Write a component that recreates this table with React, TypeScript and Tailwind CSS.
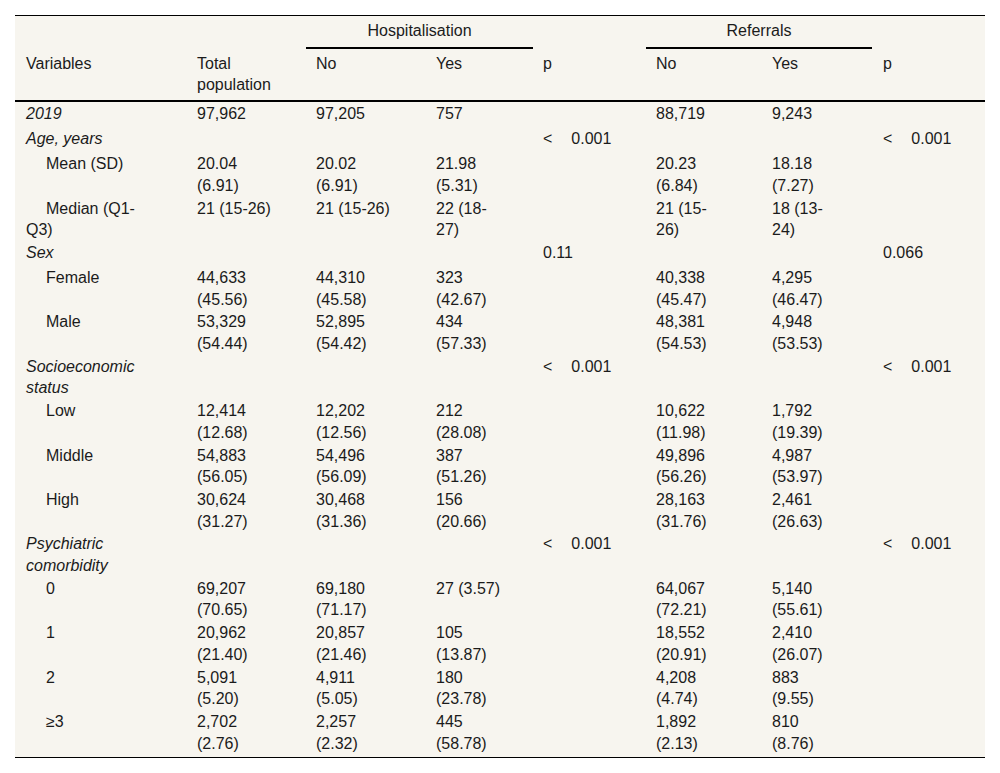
import React from 'react';

// column padding: keeps the wrap widths of the source table
const COL = [
  'pl-[11px] pr-[40px]',
  'pl-[11px] pr-[29px]',
  'pl-[10px] pr-[30px]',
  'pl-[10px] pr-[27px]',
  'pl-[10px] pr-[10px]',
  'pl-[10px] pr-[36px]',
  'pl-[10px] pr-[30px]',
  'pl-[11px] pr-[10px]',
];

type Row = {
  label: string;
  kind: 'head' | 'sub';
  cells: string[];
};

const rows: Row[] = [
  { label: '2019', kind: 'head', cells: ['97,962', '97,205', '757', '', '88,719', '9,243', ''] },
  { label: 'Age, years', kind: 'head', cells: ['', '', '', '<0.001', '', '', '<0.001'] },
  { label: 'Mean (SD)', kind: 'sub', cells: ['20.04 (6.91)', '20.02 (6.91)', '21.98 (5.31)', '', '20.23 (6.84)', '18.18 (7.27)', ''] },
  { label: 'Median (Q1-Q3)', kind: 'sub', cells: ['21 (15-26)', '21 (15-26)', '22 (18-27)', '', '21 (15-26)', '18 (13-24)', ''] },
  { label: 'Sex', kind: 'head', cells: ['', '', '', '0.11', '', '', '0.066'] },
  { label: 'Female', kind: 'sub', cells: ['44,633 (45.56)', '44,310 (45.58)', '323 (42.67)', '', '40,338 (45.47)', '4,295 (46.47)', ''] },
  { label: 'Male', kind: 'sub', cells: ['53,329 (54.44)', '52,895 (54.42)', '434 (57.33)', '', '48,381 (54.53)', '4,948 (53.53)', ''] },
  { label: 'Socioeconomic status', kind: 'head', cells: ['', '', '', '<0.001', '', '', '<0.001'] },
  { label: 'Low', kind: 'sub', cells: ['12,414 (12.68)', '12,202 (12.56)', '212 (28.08)', '', '10,622 (11.98)', '1,792 (19.39)', ''] },
  { label: 'Middle', kind: 'sub', cells: ['54,883 (56.05)', '54,496 (56.09)', '387 (51.26)', '', '49,896 (56.26)', '4,987 (53.97)', ''] },
  { label: 'High', kind: 'sub', cells: ['30,624 (31.27)', '30,468 (31.36)', '156 (20.66)', '', '28,163 (31.76)', '2,461 (26.63)', ''] },
  { label: 'Psychiatric comorbidity', kind: 'head', cells: ['', '', '', '<0.001', '', '', '<0.001'] },
  { label: '0', kind: 'sub', cells: ['69,207 (70.65)', '69,180 (71.17)', '27 (3.57)', '', '64,067 (72.21)', '5,140 (55.61)', ''] },
  { label: '1', kind: 'sub', cells: ['20,962 (21.40)', '20,857 (21.46)', '105 (13.87)', '', '18,552 (20.91)', '2,410 (26.07)', ''] },
  { label: '2', kind: 'sub', cells: ['5,091 (5.20)', '4,911 (5.05)', '180 (23.78)', '', '4,208 (4.74)', '883 (9.55)', ''] },
  { label: '≥3', kind: 'sub', cells: ['2,702 (2.76)', '2,257 (2.32)', '445 (58.78)', '', '1,892 (2.13)', '810 (8.76)', ''] },
];

// allow a line break right after each hyphen, as in the source
function Breakable({ text }: { text: string }) {
  const parts = text.split('-');
  return (
    <>
      {parts.map((p, i) => (
        <React.Fragment key={i}>
          {p}
          {i < parts.length - 1 && (
            <>
              -<wbr />
            </>
          )}
        </React.Fragment>
      ))}
    </>
  );
}

function PValue({ v }: { v: string }) {
  if (v.startsWith('<')) {
    return (
      <>
        <span>&lt;</span>
        <span className="ml-[19px]">{v.slice(1)}</span>
      </>
    );
  }
  return <>{v}</>;
}

export default function App() {
  return (
    <div
      className="min-h-screen bg-white pt-[15px] px-[15px] text-[16px] leading-[21.7px] text-[#1b1b1b]"
      style={{ fontFamily: '"Liberation Sans", Arial, sans-serif' }}
    >
      <table className="w-[970px] table-fixed border-separate border-spacing-0 bg-[#f7f5ef] border-t border-b border-black">
        <colgroup>
          <col className="w-[171px]" />
          <col className="w-[120px]" />
          <col className="w-[120px]" />
          <col className="w-[107px]" />
          <col className="w-[113px]" />
          <col className="w-[116px]" />
          <col className="w-[110px]" />
          <col className="w-[113px]" />
        </colgroup>
        <thead>
          <tr>
            <th className="p-0" />
            <th className="p-0" />
            <th colSpan={2} className="pt-[4px] pb-[5px] text-center font-normal border-b-2 border-black">
              Hospitalisation
            </th>
            <th className="p-0" />
            <th colSpan={2} className="pt-[4px] pb-[5px] text-center font-normal border-b-2 border-black">
              Referrals
            </th>
            <th className="p-0" />
          </tr>
          <tr>
            {['Variables', 'Total population', 'No', 'Yes', 'p', 'No', 'Yes', 'p'].map((h, i) => (
              <th
                key={i}
                className={`${COL[i]} pt-[4px] pb-[4px] text-left align-top font-normal border-b-2 border-black`}
              >
                {h}
              </th>
            ))}
          </tr>
        </thead>
        <tbody>
          {rows.map((r, ri) => {
            const last = ri === rows.length - 1;
            const pad = last ? 'pt-[1px] pb-[3px]' : 'pt-[1px] pb-0';
            return (
              <tr key={ri} className="h-[25px]">
                <td className={`${COL[0]} ${pad} align-top`}>
                  {r.kind === 'head' ? (
                    <span className="italic">{r.label}</span>
                  ) : (
                    <div className="indent-[20px]">
                      <Breakable text={r.label} />
                    </div>
                  )}
                </td>
                {r.cells.map((c, ci) => (
                  <td key={ci} className={`${COL[ci + 1]} ${pad} align-top`}>
                    {ci === 3 || ci === 6 ? <PValue v={c} /> : <Breakable text={c} />}
                  </td>
                ))}
              </tr>
            );
          })}
        </tbody>
      </table>
    </div>
  );
}
